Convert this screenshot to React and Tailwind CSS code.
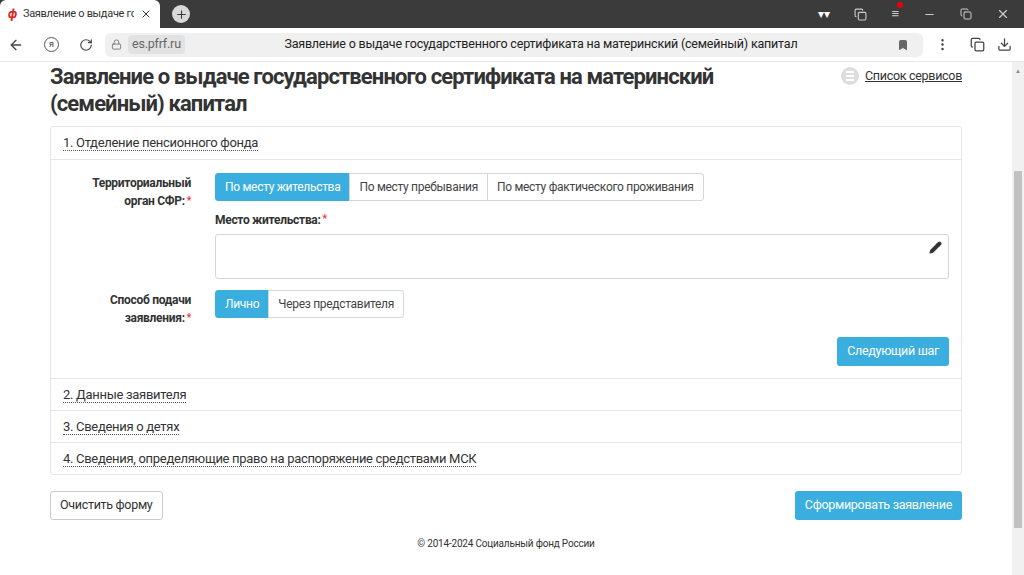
import React from "react";
import { ArrowLeft, RotateCw, Lock, Bookmark, MoreVertical, Download, Plus, X, Minus, Copy, Pencil } from "lucide-react";

const F = { fontFamily: 'Roboto, "Liberation Sans", sans-serif' };

const Req = () => <span className="text-red-500 text-[10px] align-top ml-0.5">*</span>;

const Seg = ({ items }) => (
  <div className="flex">
    {items.map((t, i) => (
      <div
        key={t}
        className={`h-[28px] px-[9px] flex items-center text-[12px] tracking-[-0.3px] border ${
          i === 0 ? "bg-[#3aaede] border-[#3aaede] text-white rounded-l-[3px]" : "bg-white border-[#d6d6d6] text-[#444] -ml-px"
        } ${i === items.length - 1 ? "rounded-r-[3px]" : ""}`}
      >
        {t}
      </div>
    ))}
  </div>
);

const Section = ({ title }) => (
  <div className="h-[32px] px-3 flex items-center border-t border-[#e6e6e6]">
    <span className="text-[13px] tracking-[-0.3px] text-[#333] border-b border-dotted border-[#555] leading-[15px]">{title}</span>
  </div>
);

export default function App() {
  return (
    <div className="w-[1024px] h-[575px] overflow-hidden bg-white flex flex-col" style={F}>
      {/* tab bar */}
      <div className="h-[28px] bg-[#3b3b3b] flex items-end">
        <div className="w-[160px] h-[28px] bg-white rounded-t-[6px] flex items-center px-2 gap-1.5 text-[11px] tracking-[-0.3px] text-[#333]">
          <span className="text-[#d9251c] font-bold text-[13px] italic">ф</span>
          <span className="flex-1 overflow-hidden whitespace-nowrap">Заявление о выдаче го</span>
          <X size={12} />
        </div>
        <div className="h-[28px] flex items-center ml-3">
          <div className="w-[18px] h-[18px] rounded-full bg-[#d9d9d9] flex items-center justify-center"><Plus size={13} className="text-[#3b3b3b]" /></div>
        </div>
        <div className="flex-1" />
        <div className="h-[28px] flex items-center gap-[24px] pr-[14px] text-[#ccc]">
          <span className="text-white text-[12px]">▾▾</span>
          <Copy size={13} />
          <span className="relative text-[13px]">≡<span className="absolute -top-0.5 -right-1 w-[6px] h-[6px] rounded-full bg-red-600" /></span>
          <Minus size={13} />
          <Copy size={12} />
          <X size={14} />
        </div>
      </div>
      {/* address bar */}
      <div className="h-[34px] flex items-center px-2 gap-3 text-[#444] border-b border-[#e5e5e5]">
        <ArrowLeft size={16} />
        <div className="w-[15px] h-[15px] rounded-full border border-[#555] text-[9px] flex items-center justify-center ml-2">я</div>
        <RotateCw size={14} className="ml-2" />
        <div className="flex-1 h-[24px] bg-[#f0f0f0] rounded-[6px] flex items-center px-1.5 gap-1.5 text-[12.5px] tracking-[-0.2px]">
          <Lock size={11} className="text-[#777]" />
          <span className="bg-[#e2e2e2] px-1 rounded text-[#666]">es.pfrf.ru</span>
          <span className="flex-1 text-center text-[#222]">Заявление о выдаче государственного сертификата на материнский (семейный) капитал</span>
          <Bookmark size={12} className="fill-[#666] text-[#666] mr-2" />
        </div>
        <MoreVertical size={15} />
        <Copy size={15} className="ml-2" />
        <Download size={15} className="mr-1" />
      </div>
      <div className="flex flex-1 min-h-0">
        <div className="flex-1 px-[50px] flex flex-col">
          <div className="flex items-start pt-[1px]">
            <h1 className="flex-1 text-[22px] leading-[27px] font-bold text-[#333] tracking-[-0.9px] whitespace-nowrap">
              Заявление о выдаче государственного сертификата на материнский<br />(семейный) капитал
            </h1>
            <div className="flex items-center gap-1.5 pt-[4px]">
              <div className="w-[18px] h-[18px] rounded-full bg-[#ddd] flex flex-col items-center justify-center gap-[2px]">
                <div className="w-[8px] h-[2px] bg-white" /><div className="w-[8px] h-[2px] bg-white" /><div className="w-[8px] h-[2px] bg-white" />
              </div>
              <span className="text-[12.5px] tracking-[-0.3px] text-[#333] underline">Список сервисов</span>
            </div>
          </div>
          <div className="mt-[9px] border border-[#e6e6e6] rounded-[3px]">
            <div className="h-[32px] px-3 flex items-center">
              <span className="text-[13px] tracking-[-0.3px] text-[#333] border-b border-dotted border-[#555] leading-[15px]">1. Отделение пенсионного фонда</span>
            </div>
            <div className="border-t border-[#e6e6e6] px-3 pt-[13px] pb-[12px]">
              <div className="flex gap-[24px]">
                <div className="w-[128px] text-right text-[12px] tracking-[-0.3px] font-bold text-[#333] leading-[18px] pt-[1px]">Территориальный<br />орган СФР:<Req /></div>
                <div className="flex-1">
                  <Seg items={["По месту жительства", "По месту пребывания", "По месту фактического проживания"]} />
                  <div className="mt-[10px] text-[12px] tracking-[-0.3px] font-bold text-[#333]">Место жительства:<Req /></div>
                  <div className="mt-[5px] h-[45px] border border-[#d6d6d6] rounded-[3px] flex justify-end p-[6px]">
                    <Pencil size={13} className="text-[#333] fill-[#333]" />
                  </div>
                </div>
              </div>
              <div className="flex gap-[24px] mt-[11px]">
                <div className="w-[128px] text-right text-[12px] tracking-[-0.3px] font-bold text-[#333] leading-[18px] pt-[1px]">Способ подачи<br />заявления:<Req /></div>
                <Seg items={["Лично", "Через представителя"]} />
              </div>
              <div className="flex justify-end mt-[10px]">
                <div className="h-[29px] px-[10px] bg-[#3aaede] text-white text-[12.5px] tracking-[-0.3px] rounded-[3px] flex items-center">Следующий шаг</div>
              </div>
            </div>
            <Section title="2. Данные заявителя" />
            <Section title="3. Сведения о детях" />
            <Section title="4. Сведения, определяющие право на распоряжение средствами МСК" />
          </div>
          <div className="flex justify-between mt-[16px]">
            <div className="h-[29px] px-[9px] border border-[#ccc] rounded-[3px] text-[12.5px] tracking-[-0.3px] text-[#333] flex items-center">Очистить форму</div>
            <div className="h-[29px] px-[10px] bg-[#3aaede] text-white text-[12.5px] tracking-[-0.3px] rounded-[3px] flex items-center">Сформировать заявление</div>
          </div>
          <div className="text-center text-[10px] tracking-[-0.2px] text-[#333] mt-[16px]">© 2014-2024 Социальный фонд России</div>
        </div>
        <div className="w-[12px] bg-[#f1f1f1] flex flex-col items-center">
          <div className="text-[6px] text-[#888] mt-1">▲</div>
          <div className="mt-[96px] w-[8px] h-[357px] bg-[#c1c1c1]" />
        </div>
      </div>
    </div>
  );
}
